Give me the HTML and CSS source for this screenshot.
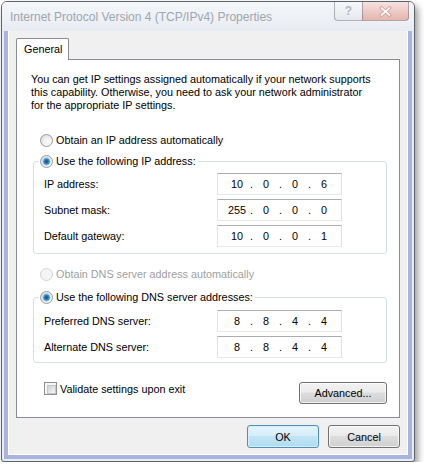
FILE: index.html
```html
<!DOCTYPE html>
<html lang="en">
	<head>
		<meta charset="UTF-8" />
		<title>Internet Protocol Version 4 (TCP/IPv4) Properties</title>
		<link rel="stylesheet" href="styles.css">
	</head>
	<body>
		<div class="window">
			<div class="titlebar">
				<span class="title">Internet Protocol Version 4 (TCP/IPv4) Properties</span>
				<div class="caption-buttons">
					<div class="caption-btn help">?</div>
					<div class="caption-btn close">
						<svg width="13" height="11" viewBox="0 0 13 11">
							<path d="M2.5 2 L10.5 9 M10.5 2 L2.5 9" stroke="#c9a09b" stroke-width="3.6" stroke-linecap="round" fill="none" />
							<path d="M2.5 2 L10.5 9 M10.5 2 L2.5 9" stroke="#fdf6f5" stroke-width="1.8" stroke-linecap="round" fill="none" />
						</svg>
					</div>
				</div>
			</div>
			<div class="frame">
				<div class="frame-inner">
					<div class="client">
						<div class="tabs">
							<div class="tab">General</div>
						</div>
						<div class="panel">
							<p class="intro">
								You can get IP settings assigned automatically if your network supports<br>
								this capability. Otherwise, you need to ask your network administrator<br>
								for the appropriate IP settings.
							</p>

							<div class="option ip-auto"><span class="radio"></span>Obtain an IP address automatically</div>

							<fieldset class="group">
								<legend><span class="option"><span class="radio checked"></span>Use the following IP address:</span></legend>
								<div class="field">
									<span>IP address:</span>
									<div class="ip"><span>10</span><i>.</i><span>0</span><i>.</i><span>0</span><i>.</i><span>6</span></div>
								</div>
								<div class="field">
									<span>Subnet mask:</span>
									<div class="ip"><span>255</span><i>.</i><span>0</span><i>.</i><span>0</span><i>.</i><span>0</span></div>
								</div>
								<div class="field">
									<span>Default gateway:</span>
									<div class="ip"><span>10</span><i>.</i><span>0</span><i>.</i><span>0</span><i>.</i><span>1</span></div>
								</div>
							</fieldset>

							<div class="option disabled dns-auto"><span class="radio"></span>Obtain DNS server address automatically</div>

							<fieldset class="group dns">
								<legend><span class="option"><span class="radio checked"></span>Use the following DNS server addresses:</span></legend>
								<div class="field">
									<span>Preferred DNS server:</span>
									<div class="ip"><span>8</span><i>.</i><span>8</span><i>.</i><span>4</span><i>.</i><span>4</span></div>
								</div>
								<div class="field">
									<span>Alternate DNS server:</span>
									<div class="ip"><span>8</span><i>.</i><span>8</span><i>.</i><span>4</span><i>.</i><span>4</span></div>
								</div>
							</fieldset>

							<div class="panel-footer">
								<div class="check"><span class="checkbox"></span>Validate settings upon exit</div>
								<button class="btn advanced">Advanced...</button>
							</div>
						</div>
						<div class="dialog-buttons">
							<button class="btn default">OK</button>
							<button class="btn">Cancel</button>
						</div>
					</div>
				</div>
			</div>
		</div>
	</body>
</html>
```

FILE: styles.css
```css
* {
	margin: 0;
	padding: 0;
	box-sizing: border-box;
}

body {
	background-color: #fff;
	font-family: "Liberation Sans", Arial, sans-serif;
	font-size: 10.8px;
	color: #000;
	padding: 1px 0 0 1px;
}

.window {
	width: 414px;
	height: 461px;
	border: 1px solid #5d636b;
	border-radius: 6px 6px 3px 3px;
	background: #e9edf3;
	box-shadow: 3px 4px 7px rgba(0, 0, 0, 0.4);
	display: flex;
	flex-direction: column;
}

/* title bar */

.titlebar {
	height: 29px;
	display: flex;
	align-items: flex-start;
	background: linear-gradient(#f4f6f9, #e8ecf2);
	border-radius: 5px 5px 0 0;
}

.title {
	margin: 8px 0 0 8px;
	font-size: 12px;
	line-height: 14px;
	color: #9ea6ae;
}

.caption-buttons {
	margin-left: auto;
	margin-right: 5px;
	display: flex;
}

.caption-btn {
	height: 19px;
	border: 1px solid rgba(70, 78, 90, 0.4);
	border-top: none;
	display: flex;
	align-items: center;
	justify-content: center;
}

.help {
	width: 28px;
	border-right: none;
	border-radius: 0 0 0 4px;
	background: linear-gradient(#f7f8fa, #e4e8ee);
	color: #b3b9c0;
	font-weight: bold;
	font-size: 12px;
}

.close {
	width: 47px;
	border-radius: 0 0 4px 0;
	background: linear-gradient(#f5e2df, #e6b5ae);
}

/* window frame */

.frame {
	flex: 1;
	padding: 0 2px 2px;
}

.frame-inner {
	height: 100%;
	border: 4px solid #aab3dd;
	border-top: none;
}

.client {
	height: 100%;
	border: 1px solid #fff;
	border-top: none;
	background: #f0f0f0;
	padding: 7px 7px 0 7px;
	display: flex;
	flex-direction: column;
}

/* tab control */

.tabs {
	display: flex;
}

.tab {
	position: relative;
	z-index: 1;
	width: 53px;
	height: 22px;
	margin-bottom: -1px;
	padding-left: 7px;
	border: 1px solid #898c95;
	border-bottom: none;
	border-radius: 2px 2px 0 0;
	background: #fff;
	line-height: 20px;
}

.panel {
	height: 359px;
	border: 1px solid #898c95;
	background: #fff;
	padding: 13px 12px 0 16px;
}

.intro {
	line-height: 13px;
	margin-left: -2px;
	white-space: nowrap;
}

.option {
	display: flex;
	align-items: center;
	height: 16px;
	white-space: nowrap;
}

.ip-auto,
.dns-auto {
	margin-left: 7px;
}

.ip-auto {
	margin-top: 20px;
}

.dns-auto {
	margin-top: 12px;
}

.disabled {
	color: #a0a0a0;
}

.radio {
	flex: none;
	width: 13px;
	height: 13px;
	margin-right: 3px;
	border: 1px solid #979ba0;
	border-radius: 50%;
	background: radial-gradient(circle at 65% 65%, #fff 0, #f1f1f1 40%, #d2d2d2 100%);
}

.radio.checked {
	background:
		radial-gradient(circle, #17476f 0, #276ca6 1.5px, #4696d4 2.8px, #a6d3f2 3.8px, rgba(255, 255, 255, 0) 4.4px),
		radial-gradient(circle at 65% 65%, #fff 0, #f1f1f1 40%, #d2d2d2 100%);
}

.disabled .radio {
	border-color: #d0d3d6;
	background: #f5f5f5;
}

/* group boxes */

.group {
	margin-top: 5px;
	border: 1px solid #d5dfe5;
	border-radius: 3px;
	padding: 4px 0 6px 10px;
}

.group legend {
	margin-left: -5px;
	padding: 0 2px 0 1px;
}

.group.dns {
	margin-top: 7px;
	padding-top: 5px;
	padding-bottom: 4px;
}

.field {
	display: grid;
	grid-template-columns: 173px 125px;
	align-items: center;
	height: 22px;
}

.field + .field {
	margin-top: 4px;
}

.ip {
	height: 22px;
	border: 1px solid;
	border-color: #abadb3 #dbdfe6 #e3e9ef #e2e3ea;
	display: flex;
	align-items: center;
	padding-left: 7px;
}

.ip span {
	width: 24px;
	text-align: center;
}

.ip i {
	width: 5px;
	font-style: normal;
	text-align: center;
}

/* footer */

.panel-footer {
	margin-top: 19px;
	display: flex;
	justify-content: space-between;
	align-items: flex-start;
}

.check {
	margin-left: 11px;
	display: flex;
	align-items: center;
	height: 13px;
}

.checkbox {
	width: 13px;
	height: 13px;
	margin-right: 3px;
	border: 1px solid #8e8f8f;
	padding: 2px;
	background: #f6f6f6;
}

.checkbox::after {
	content: "";
	display: block;
	width: 100%;
	height: 100%;
	border: 1px solid #c3c7cc;
	background: linear-gradient(135deg, #cdd1d6, #f7f7f7);
}

.btn {
	font: inherit;
	color: #000;
	height: 22px;
	border: 1px solid #707070;
	border-radius: 3px;
	background: linear-gradient(#f2f2f2, #ebebeb 45%, #dddddd 50%, #cfcfcf);
	box-shadow: inset 0 0 0 1px rgba(255, 255, 255, 0.75);
}

.advanced {
	width: 88px;
}

.dialog-buttons {
	margin-top: 7px;
	display: flex;
	justify-content: flex-end;
	gap: 9px;
}

.dialog-buttons .btn {
	width: 72px;
	height: 23px;
}

.btn.default {
	border-color: #4e8dbd;
	background: linear-gradient(#e6f4fb, #d6edf9 45%, #c2e5f7 50%, #b0dbf2);
	box-shadow: inset 0 0 0 1px #d4f1fd;
}
```
